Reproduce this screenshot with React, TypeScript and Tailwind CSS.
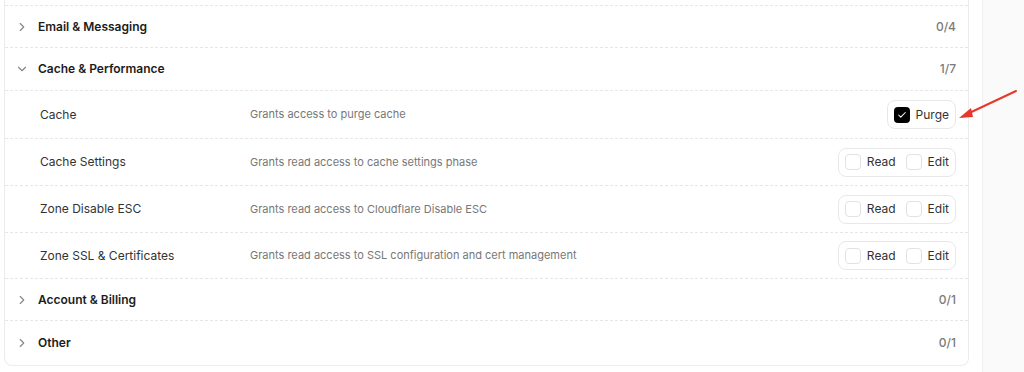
import { ChevronRight, ChevronDown, Check } from "lucide-react";

type Perm = {
  name: string;
  description: string;
  options: { label: string; checked: boolean }[];
  height: string;
};

const cachePerms: Perm[] = [
  {
    name: "Cache",
    description: "Grants access to purge cache",
    options: [{ label: "Purge", checked: true }],
    height: "h-[48px]",
  },
  {
    name: "Cache Settings",
    description: "Grants read access to cache settings phase",
    options: [
      { label: "Read", checked: false },
      { label: "Edit", checked: false },
    ],
    height: "h-[47px]",
  },
  {
    name: "Zone Disable ESC",
    description: "Grants read access to Cloudflare Disable ESC",
    options: [
      { label: "Read", checked: false },
      { label: "Edit", checked: false },
    ],
    height: "h-[47px]",
  },
  {
    name: "Zone SSL & Certificates",
    description: "Grants read access to SSL configuration and cert management",
    options: [
      { label: "Read", checked: false },
      { label: "Edit", checked: false },
    ],
    height: "h-[46px]",
  },
];

function Checkbox({ checked }: { checked: boolean }) {
  return checked ? (
    <span className="flex h-4 w-4 items-center justify-center rounded-[4px] bg-black">
      <Check className="h-2.5 w-2.5 text-white" strokeWidth={2.5} />
    </span>
  ) : (
    <span className="h-4 w-4 rounded-[4px] border border-[#e2e2e2] bg-white" />
  );
}

function GroupRow({
  title,
  count,
  open,
  height,
  last,
}: {
  title: string;
  count: string;
  open?: boolean;
  height: string;
  last?: boolean;
}) {
  return (
    <div
      className={`flex items-center justify-between pl-[10px] pr-3 ${height} ${
        last ? "" : "border-b border-dashed border-[#e6e6e6]"
      }`}
    >
      <div className="flex items-center gap-[9px]">
        {open ? (
          <ChevronDown className="h-3.5 w-3.5 text-[#888]" strokeWidth={2} />
        ) : (
          <ChevronRight className="h-3.5 w-3.5 text-[#888]" strokeWidth={2} />
        )}
        <span className="text-[12px] font-semibold text-[#1c1c1c]">{title}</span>
      </div>
      <span className="text-[12px] font-medium text-[#7a7a7a]">{count}</span>
    </div>
  );
}

function PermRow({ perm }: { perm: Perm }) {
  return (
    <div
      className={`grid grid-cols-[210px_1fr_auto] items-center border-b border-dashed border-[#e6e6e6] pl-[35px] pr-3 ${perm.height}`}
    >
      <span className="text-[12px] text-[#333]">{perm.name}</span>
      <span className="text-[11px] text-[#777]">{perm.description}</span>
      <div className="flex h-[29px] items-center gap-[10px] rounded-lg border border-[#e8e8e8] bg-white px-[6px]">
        {perm.options.map((o) => (
          <label key={o.label} className="flex items-center gap-[6px]">
            <Checkbox checked={o.checked} />
            <span className="text-[12px] text-[#333]">{o.label}</span>
          </label>
        ))}
      </div>
    </div>
  );
}

export default function App() {
  return (
    <div
      className="relative flex h-[372px] w-[1024px] overflow-hidden bg-white"
      style={{ fontFamily: "Inter, 'Noto Sans', sans-serif" }}
    >
      <div className="w-[969px] shrink-0 pl-1">
        <div className="rounded-b-lg border border-t-0 border-[#ececec] bg-white">
          <div className="h-[6px] border-b border-dashed border-[#e6e6e6]" />
          <GroupRow title="Email & Messaging" count="0/4" height="h-[42px]" />
          <GroupRow title="Cache & Performance" count="1/7" open height="h-[43px]" />
          {cachePerms.map((p) => (
            <PermRow key={p.name} perm={p} />
          ))}
          <GroupRow title="Account & Billing" count="0/1" height="h-[42px]" />
          <GroupRow title="Other" count="0/1" height="h-[44px]" last />
        </div>
      </div>
      <div className="ml-[13px] flex-1 border-l border-[#f0f0f0] bg-[#fafafa]" />

      {/* annotation arrow */}
      <svg
        className="pointer-events-none absolute left-[955px] top-[86px]"
        width="66"
        height="40"
        viewBox="0 0 66 40"
      >
        <line x1="61" y1="5" x2="10" y2="29" stroke="#e5392b" strokeWidth="2" strokeLinecap="round" />
        <polygon points="4,32 16,22 18,31" fill="#e5392b" />
      </svg>
    </div>
  );
}
